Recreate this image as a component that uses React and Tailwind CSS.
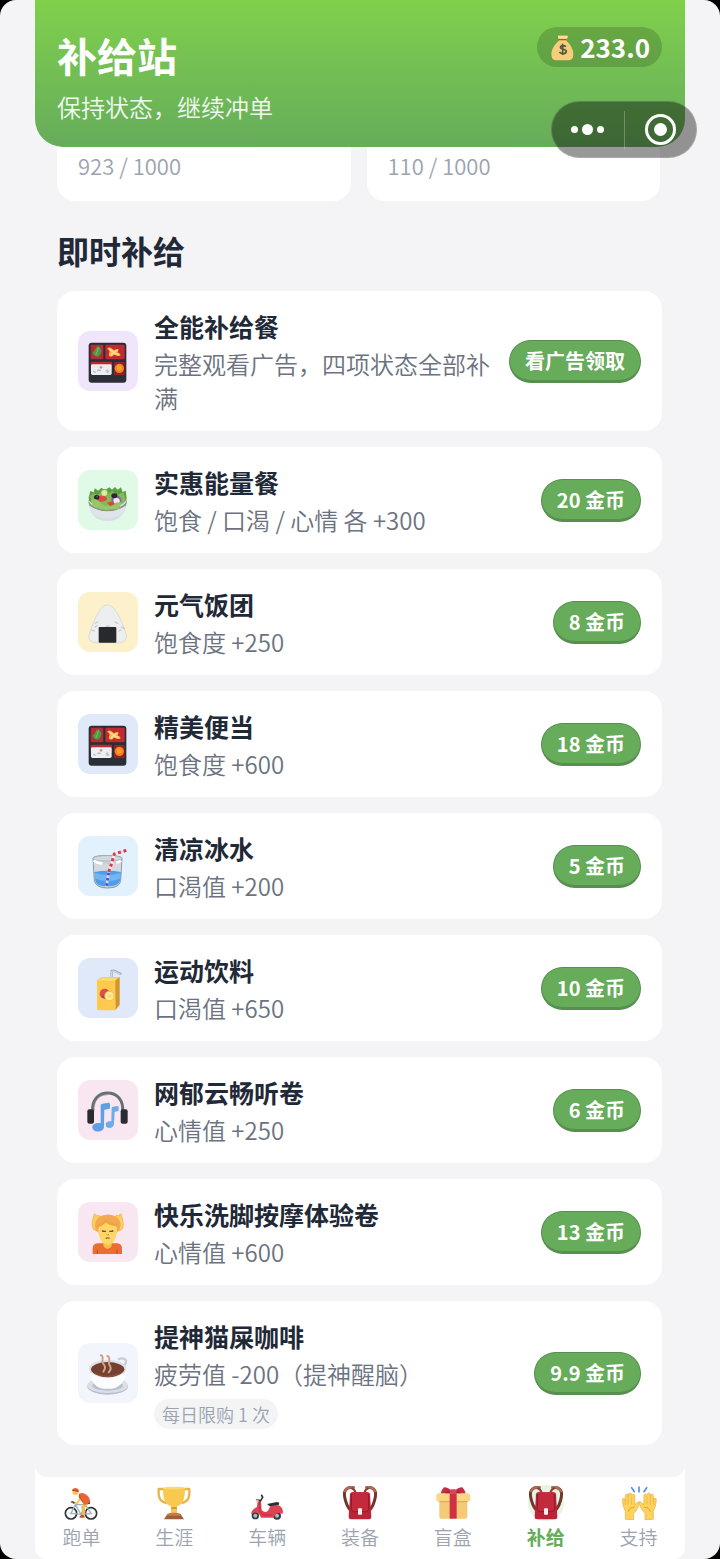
import clsx from 'clsx'

/* ---------- item drawings, all on a 180 grid ---------- */

function Bento() {
  return (
    <>
      <rect x="32" y="35" width="113" height="120" rx="9" fill="#2b2e36" />
      <rect x="38" y="41" width="38" height="44" rx="4" fill="#b92b33" />
      <rect x="82" y="41" width="58" height="44" rx="4" fill="#c22a33" />
      <path d="M59 45q6 2 9 8 4 6 1 12-2 8-9 12-8 1-11-4-5-3-5-9 5-3 7-8 3-7 8-11Z" fill="#4f9a45" />
      <path d="M61 50q-2 12-8 22" stroke="#7fc263" strokeWidth="3" fill="none" />
      <path d="M88 52q7-5 12 0l8 6q7-5 13-4 2 5-3 10 9 3 10 8-4 5-11 2l-9-3q-7 8-13 5-5-4-1-11 2-5-1-8-5-1-5-5Z" fill="#fbb950" />
      <path d="M94 55q9 4 13 10m0 0q6-5 10-6m-10 6q8 4 14 5m-14-5q-5 3-7 8" stroke="#ffdf92" strokeWidth="4" strokeLinecap="round" fill="none" />
      <rect x="38" y="92" width="64" height="24" rx="3" fill="#b92b33" />
      <path d="M39 104q0-4 4-4h54q4 0 4 4v23q0 5-5 5H44q-5 0-5-5Z" fill="#eceef1" />
      <path d="m47 121 4 3m8-5 4-2m22 2 4-2m-2 7 5-3m-30-4 5 1" stroke="#b4bac1" strokeWidth="4" strokeLinecap="round" />
      <circle cx="69" cy="109" r="4" fill="#dc8e91" />
      <rect x="108" y="93" width="32" height="40" rx="4" fill="#8d2425" />
      <circle cx="124" cy="112" r="14" fill="#f57e1e" />
      <circle cx="124" cy="111" r="8" fill="#ff9a33" />
    </>
  )
}

function Salad() {
  return (
    <>
      <path d="M32 83 37 63 47 67 50 55 61 62 70 53 81 61 94 52 102 59 111 51 119 59 129 52 134 66 143 62 146 85 142 108H35Z" fill="#5c9f42" />
      <path d="M35 78 48 70 58 76 72 64 87 74 103 63 117 75 136 67 144 91 128 113H48Z" fill="#84b95a" />
      <path d="M32 91q56 54 114 0c0 35-18 62-57 62S32 126 32 91Z" fill="#d6dce4" />
      <path d="M32 89c3 38 111 38 114 0v11c-9 32-106 31-114 0Z" fill="#759f50" />
      <path d="M34 107q54 35 109 0-3 16-12 28-45 22-85 0-9-12-12-28Z" fill="#dfe3ea" />
      <path d="M35 105q54 31 107 0" stroke="#8d969a" strokeWidth="4" fill="none" />
      <circle cx="79" cy="69" r="12" fill="#78ac4e" />
      <circle cx="79" cy="69" r="9" fill="#ddea9f" />
      <ellipse cx="70" cy="86" rx="17" ry="9" fill="#df4944" />
      <ellipse cx="56" cy="82" rx="8" ry="7" fill="#28252f" />
      <circle cx="57" cy="80" r="2" fill="#777" />
      <path d="M100 87c2-15 25-16 30 2v11h-27Z" fill="#8863a5" />
      <path d="M106 90c4-10 18-8 20 3l-3 7-14 2Z" fill="#eee6f2" />
      <ellipse cx="109" cy="77" rx="9" ry="7" fill="#292733" />
      <path d="M38 92q13-12 28 5t30 8 35-9l-8 20-41 4-35-9Z" fill="#98c76a" />
      <path d="m87 98 14-4 10 8-14 7Z" fill="#d94735" />
    </>
  )
}

function Onigiri() {
  return (
    <>
      <path d="M88 39c9 0 16 5 22 13 13 19 25 43 34 74 5 16-6 26-20 26H54c-16 0-26-11-20-26 10-31 20-55 33-74 6-8 12-13 21-13Z" fill="#eceef0" stroke="#cdd0d4" strokeWidth="2" />
      <path d="m52 93 7-3m52 0 8 4m-78 20 8 3m2-12 6-4m74 5 9 3m-17 8 6-3m-44-11 8-1" stroke="#c6cad0" strokeWidth="4" strokeLinecap="round" />
      <rect x="62" y="105" width="53" height="47" rx="3" fill="#27292d" />
    </>
  )
}

function IceWater() {
  return (
    <>
      <path d="M45 66c2-10 85-10 87 0l-4 68q-3 22-39 22t-40-22Z" fill="#c6cdd7" stroke="#8b98a5" strokeWidth="3" />
      <ellipse cx="88" cy="67" rx="42" ry="8" fill="#d3dadd" stroke="#aab4bc" strokeWidth="2" />
      <path d="M47 75q40 17 83 0l-2 34H49Z" fill="#d6dce1" opacity=".8" />
      <path d="M49 108q40-8 80 0l-3 26q-4 17-38 17t-36-17Z" fill="#4f9cea" />
      <path d="M50 110q38 13 78 0l-2 18q-35 14-74 0Z" fill="#73b5f3" />
      <path d="m145 43-36 11-11 37-7 20" stroke="#f8e8ea" strokeWidth="9" fill="none" strokeLinejoin="round" />
      <path d="m145 43-36 11-11 37-7 20" stroke="#d23c51" strokeWidth="9" strokeDasharray="9 8" fill="none" />
      <path d="m92 110-7 43" stroke="#d7d8f6" strokeWidth="8" />
      <path d="m92 110-7 43" stroke="#494fbc" strokeWidth="8" strokeDasharray="8 8" />
      <path d="M48 73q6 8 25 9m42-2q9-2 14-6" stroke="#fff" strokeWidth="8" fill="none" />
    </>
  )
}

function JuiceBox() {
  return (
    <>
      <path d="M101 61V39l8-1 21 11" stroke="#9aa8b6" strokeWidth="7" fill="none" strokeLinejoin="round" />
      <path d="M101 61V40l7-1 20 10" stroke="#d8e0e7" strokeWidth="3" fill="none" />
      <path d="m57 66 15-9h53l-13 12Z" fill="#f5cf67" />
      <path d="m111 68 14-11v84l-13 16Z" fill="#cf962f" />
      <path d="M57 66h55v91H60q-3 0-3-4Z" fill="#ffc94e" />
      <path d="m61 68 14-7h40l-7 7Z" fill="#ffda75" />
      <circle cx="80" cy="107" r="15" fill="#d7504d" />
      <path d="M72 116q6-8 12-7v13q-8 0-12-6Z" fill="#ab4250" />
      <circle cx="94" cy="114" r="15" fill="#ffc23c" />
      <circle cx="94" cy="114" r="12" fill="#ffefaa" />
      <circle cx="94" cy="114" r="7" fill="#ffda6c" />
    </>
  )
}

function Headphones() {
  return (
    <>
      <path d="M44 97V82C46 57 63 39 89 39s43 18 45 43v15" stroke="#696e76" strokeWidth="9" fill="none" />
      <path d="M48 92V82q5-38 41-38" stroke="#878c94" strokeWidth="2" fill="none" />
      <rect x="28" y="88" width="20" height="43" rx="6" fill="#292b30" />
      <rect x="128" y="88" width="21" height="43" rx="6" fill="#292b30" />
      <path d="M68 76q0-4 5-5l19-3q4 0 4 5v10q0 4-4 4l-13 2-1 52c-1 17-34 19-35 1 0-10 13-15 25-12Z" fill="#5f9fe4" />
      <path d="M101 84q0-3 4-4l13-2q4 0 4 4v8q0 4-4 4l-8 1-2 37c-1 15-25 16-25 2 0-8 8-12 17-10Z" fill="#6eabe9" />
    </>
  )
}

function Massage() {
  return (
    <>
      <path d="M44 156v-17q1-15 17-15h54q16 0 17 15v17Z" fill="#ed6c30" />
      <path d="M58 143v13m59-13v13" stroke="#b94d26" strokeWidth="3" />
      <path d="M76 112h25v20q-5 9-12 9t-13-9Z" fill="#f3c447" />
      <path d="M46 82c-8-16-1-30 2-44 2-5 6-2 6 4l7-2q6 0 5 9L56 87Zm86 0c8-16 1-30-2-44-2-5-6-2-6 4l-7-2q-6 0-5 9l10 38Z" fill="#f9cf60" stroke="#e5b04a" strokeWidth="2" />
      <path d="M53 84C45 58 62 40 80 39q12-4 24 1c20 6 29 24 20 44l-12 12H65Z" fill="#f4a850" />
      <path d="M61 82c0-16 14-18 28-24 12 9 28 8 28 24 0 28-12 46-28 46S61 110 61 82Z" fill="#ffd667" />
      <path d="M72 86q6 4 12 1m10 0q6 3 12-1" stroke="#704c36" strokeWidth="4" fill="none" />
      <path d="m85 97 4 2 4-2" stroke="#cf9240" strokeWidth="3" fill="none" />
      <path d="M83 109q6-3 12 0" stroke="#b4563a" strokeWidth="4" fill="none" />
      <path d="M58 72q15-3 25-16 14 13 34 13" stroke="#f0a33f" strokeWidth="7" fill="none" />
    </>
  )
}

function Coffee() {
  return (
    <>
      <ellipse cx="89" cy="130" rx="61" ry="25" fill="#b6bfca" />
      <ellipse cx="89" cy="127" rx="61" ry="23" fill="#dce0e6" />
      <ellipse cx="89" cy="128" rx="46" ry="15" fill="#b8c2cf" />
      <path d="M120 50c14-8 29-2 23 11-4 9-14 13-22 14" stroke="#c8ced6" strokeWidth="7" fill="none" />
      <path d="M33 77c0 31 17 57 43 60h26c27-4 43-29 43-60Z" fill="#fbfcfd" />
      <ellipse cx="89" cy="77" rx="56" ry="27" fill="#dde1e7" />
      <ellipse cx="89" cy="79" rx="50" ry="22" fill="#74402f" />
      <path d="M43 85q42 26 91 0-12 18-45 18T43 85Z" fill="#8a4d37" />
      <path d="M68 37c12 1 1 17 7 24s10 13 1 25m12-47c13 5 1 19 6 26s7 14-2 23" stroke="#d0a189" strokeWidth="6" fill="none" strokeLinecap="round" />
    </>
  )
}

/* ---------- tab drawings, all on a 108 grid ---------- */

function Cyclist() {
  return (
    <>
      <g fill="none" stroke="#2c3138" strokeWidth="5">
        <circle cx="24" cy="85" r="17" />
        <circle cx="84" cy="85" r="17" />
      </g>
      <g fill="none" stroke="#c9d2d8" strokeWidth="1">
        <path d="M24 69v32M8 85h32M84 69v32M68 85h32" />
      </g>
      <path d="m24 85 13-26h30L54 88Zm30 3 30-3-17-26M37 59l17 29" stroke="#9fb1bc" strokeWidth="4" fill="none" />
      <path d="m66 51 15-4v9l-13 3Z" fill="#31363d" />
      <path d="m70 56-11 11 4 12-4 14" stroke="#f4bd48" strokeWidth="9" strokeLinejoin="round" fill="none" />
      <path d="M51 92q8-5 13 0l1 6H49Z" fill="#c94f30" />
      <path d="M48 26q12-5 22 3 12 9 11 22-6 9-18 8-5-8-11-14-7-8-4-19Z" fill="#e86535" />
      <path d="M52 40 43 54l-15-1" stroke="#fac658" strokeWidth="6" strokeLinejoin="round" fill="none" />
      <path d="M24 52q5-4 10 3" stroke="#2c3138" strokeWidth="4" fill="none" />
      <path d="M50 30q-1 11 8 17" stroke="#b54829" strokeWidth="3" fill="none" />
      <circle cx="37" cy="21" r="9" fill="#f8c652" />
      <path d="M27 17c1-10 18-12 21 0l-1 5Z" fill="#e85d34" />
      <path d="m28 16 17 2" stroke="#9e3c2a" strokeWidth="2" />
    </>
  )
}

function Trophy() {
  return (
    <>
      <path d="M23 12H8c-1 20 0 38 24 42m53-42h15c1 20 0 38-24 42" stroke="#e9b450" strokeWidth="7" strokeLinejoin="round" fill="none" />
      <path d="M21 9h66c0 29-4 50-24 55v24H45V64C25 59 21 38 21 9Z" fill="#f8c851" />
      <ellipse cx="54" cy="9" rx="33" ry="4" fill="#fbd871" />
      <path d="M46 66h16l1 6H45Z" fill="#d99b3b" />
      <path d="M34 88q20-8 40 0l10 15H24Z" fill="#a35c3b" />
      <path d="M33 87q21-8 42 0v5H33Z" fill="#c57c4c" />
    </>
  )
}

function Scooter() {
  return (
    <>
      <circle cx="19" cy="92" r="11" fill="#343b45" />
      <circle cx="84" cy="92" r="12" fill="#343b45" />
      <circle cx="19" cy="92" r="6" fill="#acb9be" />
      <circle cx="84" cy="92" r="6" fill="#acb9be" />
      <path d="M26 46q6-5 10 3l2 26q12 12 21-1l6-13h24c12 6 15 16 11 27-10-8-22-2-26 10H36c-5-16-17-20-30-10 3-15 11-18 18-22Z" fill="#e04254" />
      <path d="M32 49v27q4 14 16 14h20" stroke="#b92e43" strokeWidth="3" fill="none" />
      <path d="m54 57 30-6 7 2-2 7-27 4Z" fill="#2b3038" />
      <path d="m38 31 3 6-6 10-12-2" stroke="#2b3038" strokeWidth="5" strokeLinecap="round" fill="none" />
      <circle cx="25" cy="48" r="4" fill="#f1c9bd" />
    </>
  )
}

function Backpack() {
  return (
    <>
      <path d="M37 9C16 4 4 14 8 36c3 17 7 28 16 38M71 9c21-5 33 5 29 27-3 17-7 28-16 38" stroke="#74352d" strokeWidth="9" fill="none" />
      <path d="M38 8C22 4 11 9 8 22M70 8c16-4 27 1 30 14" stroke="#b26a52" strokeWidth="7" fill="none" />
      <path d="M28 9q10 3 12 13M80 9q-10 3-12 13" stroke="#8c4638" strokeWidth="7" fill="none" />
      <path d="M30 22h48q5 0 6 6l4 68q0 7-7 7H27q-7 0-7-7l4-68q1-6 6-6Z" fill="#bd2337" />
      <path d="M30 22h48l2 50q-1 8-9 8H37q-8 0-9-8Z" fill="#c32a3c" />
      <path d="m29 27-1 45q1 8 9 8h34q8 0 9-8l-1-45" stroke="#8f1c2d" strokeWidth="3" fill="none" />
      <rect x="48" y="70" width="12" height="19" rx="2" fill="#f7f0ec" />
    </>
  )
}

function Gift() {
  return (
    <>
      <path d="M13 41h84v54q0 6-6 6H19q-6 0-6-6Z" fill="#f4ca74" />
      <rect x="4" y="25" width="102" height="25" rx="8" fill="#fbd685" />
      <path d="M13 50h84" stroke="#d6a557" strokeWidth="3" />
      <path d="M44 25h21v76H44Z" fill="#cf3046" />
      <path d="M50 25H17q3-11 10-18 14 1 23 11Zm9 0h33q-3-11-10-18-14 1-23 11Z" fill="#c52c43" />
      <path d="M30 25q8-8 15-6v6Zm49 0q-8-8-15-6v6Z" fill="#8f2536" />
      <rect x="44" y="13" width="21" height="14" rx="5" fill="#df4257" />
    </>
  )
}

function RaisedHands() {
  const hand =
    'M13 103V79Q5 64 4 46q0-6 4-6 3 0 4 6l1-14q1-5 5-5 4 1 4 6l1-6q2-4 5-3 4 1 4 6l2-1q4-4 7 1l1 30 6-7q5-5 8-1-3 15-12 27l-6 6v19Z'
  return (
    <>
      <g fill="#ffd25a" stroke="#e2ad48" strokeWidth="2">
        <path d={hand} />
        <path d={hand} transform="matrix(-1 0 0 1 110 0)" />
      </g>
      <path d="M13 44v16m9-27v26m10-25v24M97 44v16m-9-27v26m-10-25v24" stroke="#e2ad48" strokeWidth="2" />
      <path d="M22 80q4-14 18-13m48 13q-4-14-18-13" stroke="#dc9c43" strokeWidth="3" fill="none" />
      <path d="m32 8 8 12M54 6v14M77 8l-8 12" stroke="#5492dd" strokeWidth="5" strokeLinecap="round" />
    </>
  )
}

function MoneyBag() {
  return (
    <svg viewBox="0 0 81 81" className="size-[27px]" aria-hidden="true">
      <path d="M27 5h28l-3 15c15 12 24 33 20 48q-2 10-13 11H21Q10 78 8 68C4 51 15 31 30 20Z" fill="#f6cd7b" />
      <path d="M27 5h29v8H27Z" fill="#ffdc8f" />
      <path d="M29 17h24" stroke="#a9573c" strokeWidth="4" />
      <path d="M51 38q-8-6-16-1c-5 10 17 7 17 15 0 9-15 9-21 2m10-25v34" stroke="#535a40" strokeWidth="5" fill="none" />
    </svg>
  )
}

const stats = [
  { id: 'a', value: 923, max: 1000 },
  { id: 'b', value: 110, max: 1000 },
]

const items = [
  { name: '全能补给餐', desc: '完整观看广告，四项状态全部补满', action: '看广告领取', Icon: Bento, tint: 'bg-[#f0e6fb]' },
  { name: '实惠能量餐', desc: '饱食 / 口渴 / 心情 各 +300', action: '20 金币', Icon: Salad, tint: 'bg-[#e1f9e7]' },
  { name: '元气饭团', desc: '饱食度 +250', action: '8 金币', Icon: Onigiri, tint: 'bg-[#fcf1cb]' },
  { name: '精美便当', desc: '饱食度 +600', action: '18 金币', Icon: Bento, tint: 'bg-[#dfe9fa]' },
  { name: '清凉冰水', desc: '口渴值 +200', action: '5 金币', Icon: IceWater, tint: 'bg-[#e3f1fd]' },
  { name: '运动饮料', desc: '口渴值 +650', action: '10 金币', Icon: JuiceBox, tint: 'bg-[#dfe9fa]' },
  { name: '网郁云畅听卷', desc: '心情值 +250', action: '6 金币', Icon: Headphones, tint: 'bg-[#f8e7f1]' },
  { name: '快乐洗脚按摩体验卷', desc: '心情值 +600', action: '13 金币', Icon: Massage, tint: 'bg-[#f8e7f1]' },
  { name: '提神猫屎咖啡', desc: '疲劳值 -200（提神醒脑）', limit: '每日限购 1 次', action: '9.9 金币', Icon: Coffee, tint: 'bg-[#f2f5fb]' },
]

const tabs = [
  { label: '跑单', Icon: Cyclist },
  { label: '生涯', Icon: Trophy },
  { label: '车辆', Icon: Scooter },
  { label: '装备', Icon: Backpack },
  { label: '盲盒', Icon: Gift },
  { label: '补给', Icon: Backpack, active: true },
  { label: '支持', Icon: RaisedHands },
]

function ItemCard({ name, desc, limit, action, Icon, tint }) {
  return (
    <li className="flex items-center gap-4 rounded-[18px] bg-white px-[21px] py-4">
      <div className={clsx('size-[60px] shrink-0 rounded-xl', tint)}>
        <svg viewBox="0 0 180 180" className="size-full" aria-hidden="true">
          <Icon />
        </svg>
      </div>
      <div className="min-w-0 flex-1">
        <h3 className="mb-0.5 text-[25px] leading-[38px] font-bold text-[#1f2937]">{name}</h3>
        <p className="text-2xl leading-[34px] font-[350] text-[#6b7280]">{desc}</p>
        {limit && (
          <span className="mt-2 inline-block rounded-full bg-[#f3f4f6] px-2 align-top text-lg leading-[30px] font-[350] text-[#9ca3af]">
            {limit}
          </span>
        )}
      </div>
      <button className="shrink-0 rounded-full border border-b-3 border-[#568f4e] bg-[#66ac5a] px-[15px] text-xl leading-[39px] font-bold text-white">
        {action}
      </button>
    </li>
  )
}

/* Host app capsule, floats over the page */
function Capsule() {
  return (
    <div className="absolute top-[101px] right-[23px] z-20 flex h-[57px] w-[146px] items-center rounded-full border border-white/15 bg-black/40">
      <button aria-label="更多" className="flex flex-1 items-center justify-center gap-1">
        <span className="size-[7px] rounded-full bg-white" />
        <span className="size-[11px] rounded-full bg-white" />
        <span className="size-[7px] rounded-full bg-white" />
      </button>
      <span className="h-[38px] w-px bg-white/25" />
      <button aria-label="关闭" className="flex flex-1 justify-center">
        <span className="flex size-[31px] items-center justify-center rounded-full border-3 border-white">
          <span className="size-[13px] rounded-full bg-white" />
        </span>
      </button>
    </div>
  )
}

export default function App() {
  return (
    <div
      lang="zh-CN"
      className="min-h-screen bg-black font-['Noto_Sans_CJK_SC','Noto_Sans',sans-serif]"
    >
      <div className="relative min-h-screen overflow-hidden rounded-2xl bg-[#f4f4f6]">
        <Capsule />

        <div className="mx-[35px] flex min-h-screen flex-col rounded-b-xl bg-white">
          <div className="flex-1 rounded-b-xl bg-[#f4f4f6]">
            <header className="relative z-10 flex items-start justify-between rounded-b-[28px] bg-linear-to-b from-[#80d04b] to-[#66ac5a] pt-[27px] pr-[23px] pb-[22px] pl-[22px] text-white">
              <div>
                <h1 className="mb-1.5 text-[40px] leading-[56px] font-bold">补给站</h1>
                <p className="text-2xl leading-9 font-[350] text-white/90">保持状态，继续冲单</p>
              </div>
              <div className="flex h-10 items-center gap-1 rounded-full bg-black/16 px-3">
                <MoneyBag />
                <span className="text-[26px] leading-10 font-bold">233.0</span>
              </div>
            </header>

            <main className="pr-[23px] pb-8 pl-[22px]">
              <div className="-mt-[22px] grid grid-cols-2 gap-4 pr-0.5">
                {stats.map((s) => (
                  <div key={s.id} className="rounded-[18px] bg-white px-[21px] pt-6 pb-5 text-[22px] leading-8 font-[350] text-[#9ca3af]">
                    {s.value} / {s.max}
                  </div>
                ))}
              </div>

              <h2 className="mt-7 mb-5 text-[32px] leading-[42px] font-bold text-[#1f2937]">即时补给</h2>

              <ul className="flex flex-col gap-4">
                {items.map((item) => (
                  <ItemCard key={item.name} {...item} />
                ))}
              </ul>
            </main>
          </div>

          <nav className="grid grid-cols-7 pt-2 pb-1.5">
            {tabs.map(({ label, Icon, active }) => (
              <a key={label} href="#" className="flex flex-col items-center">
                <span className={clsx('size-9 rounded-full', active && 'bg-[#e6f4e6]')}>
                  <svg viewBox="0 0 108 108" className="size-full" aria-hidden="true">
                    <Icon />
                  </svg>
                </span>
                <span
                  className={clsx(
                    'text-[19px] leading-8',
                    active ? 'font-bold text-[#66ac5a]' : 'font-[350] text-[#9ca3af]'
                  )}
                >
                  {label}
                </span>
              </a>
            ))}
          </nav>
        </div>
      </div>
    </div>
  )
}
